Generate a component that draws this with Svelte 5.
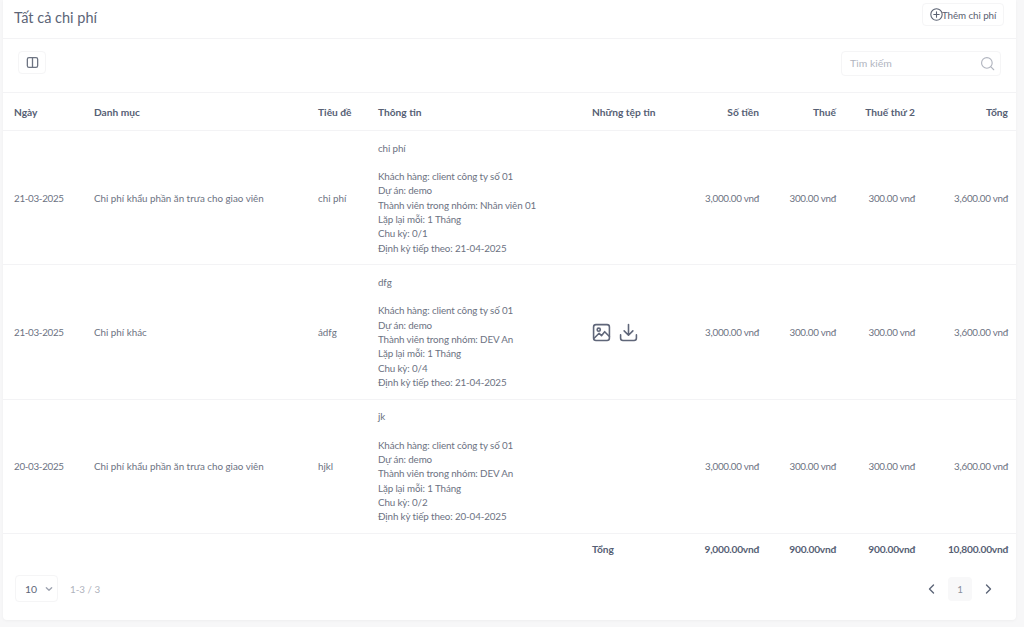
<script>
	let rows = [
		{ date: '21-03-2025', cat: 'Chi phí khẩu phần ăn trưa cho giao viên', title: 'chi phí', note: 'chi phí', member: 'Nhân viên 01', cycle: '0/1', next: '21-04-2025', files: false },
		{ date: '21-03-2025', cat: 'Chi phí khác', title: 'ádfg', note: 'dfg', member: 'DEV An', cycle: '0/4', next: '21-04-2025', files: true },
		{ date: '20-03-2025', cat: 'Chi phí khẩu phần ăn trưa cho giao viên', title: 'hjkl', note: 'jk', member: 'DEV An', cycle: '0/2', next: '20-04-2025', files: false }
	];
</script>

<div class="page">
	<div class="card">
		<div class="top">
			<h1>Tất cả chi phí</h1>
			<button class="add">
				<svg width="13" height="13" viewBox="0 0 24 24" fill="none" stroke="currentColor" stroke-width="2" stroke-linecap="round"><circle cx="12" cy="12" r="10.5" /><path d="M12 7v10M7 12h10" /></svg>Thêm chi phí
			</button>
		</div>
		<div class="tools">
			<button class="cols" aria-label="Cột">
				<svg width="13" height="13" viewBox="0 0 24 24" fill="none" stroke="currentColor" stroke-width="2.4"><rect x="2.5" y="3" width="19" height="18" rx="3" /><path d="M12 3v18" /></svg>
			</button>
			<div class="search">
				<span>Tìm kiếm</span>
				<svg width="15" height="15" viewBox="0 0 24 24" fill="none" stroke="currentColor" stroke-width="1.8" stroke-linecap="round"><circle cx="11" cy="11" r="8.5" /><path d="M17.5 17.5 22 22" /></svg>
			</div>
		</div>
		<table>
			<colgroup>
				<col style="width:80px" />
				<col style="width:224px" />
				<col style="width:60px" />
				<col style="width:214px" />
				<col style="width:109px" />
				<col style="width:80px" />
				<col style="width:77px" />
				<col style="width:79px" />
				<col style="width:90px" />
			</colgroup>
			<thead>
				<tr>
					<th>Ngày</th>
					<th>Danh mục</th>
					<th>Tiêu đề</th>
					<th>Thông tin</th>
					<th>Những tệp tin</th>
					<th class="num">Số tiền</th>
					<th class="num">Thuế</th>
					<th class="num">Thuế thứ 2</th>
					<th class="num">Tổng</th>
				</tr>
			</thead>
			<tbody>
				{#each rows as row}
					<tr>
						<td class="date">{row.date}</td>
						<td>{row.cat}</td>
						<td>{row.title}</td>
						<td class="info">
							<p class="note">{row.note}</p>
							<p>Khách hàng: client công ty số 01</p>
							<p>Dự án: demo</p>
							<p>Thành viên trong nhóm: {row.member}</p>
							<p>Lặp lại mỗi: 1 Tháng</p>
							<p>Chu kỳ: {row.cycle}</p>
							<p>Định kỳ tiếp theo: {row.next}</p>
						</td>
						<td>
							{#if row.files}
								<div class="files">
									<svg width="19" height="19" viewBox="0 0 24 24" fill="none" stroke="currentColor" stroke-width="2" stroke-linecap="round" stroke-linejoin="round"><rect x="2" y="2" width="20" height="20" rx="3" /><circle cx="8.5" cy="8.5" r="2" /><path d="m3 19 6-6 3 3 4-5 6 6" /></svg>
									<svg width="19" height="19" viewBox="0 0 24 24" fill="none" stroke="currentColor" stroke-width="2" stroke-linecap="round" stroke-linejoin="round"><path d="M12 2v13M6.5 10l5.5 5.5 5.5-5.5M2 15v4a3 3 0 0 0 3 3h14a3 3 0 0 0 3-3v-4" /></svg>
								</div>
							{/if}
						</td>
						<td class="num">3,000.00 vnđ</td>
						<td class="num">300.00 vnđ</td>
						<td class="num">300.00 vnđ</td>
						<td class="num">3,600.00 vnđ</td>
					</tr>
				{/each}
			</tbody>
			<tfoot>
				<tr>
					<td colspan="4"></td>
					<td>Tổng</td>
					<td class="num">9,000.00vnđ</td>
					<td class="num">900.00vnđ</td>
					<td class="num">900.00vnđ</td>
					<td class="num">10,800.00vnđ</td>
				</tr>
			</tfoot>
		</table>
		<div class="pager">
			<div class="size">
				<span>10</span>
				<svg width="8" height="8" viewBox="0 0 12 12" fill="none" stroke="currentColor" stroke-width="2" stroke-linecap="round" stroke-linejoin="round"><path d="m2 4 4 4 4-4" /></svg>
			</div>
			<span class="count">1-3 / 3</span>
			<div class="pages">
				<svg width="12" height="12" viewBox="0 0 12 12" fill="none" stroke="currentColor" stroke-width="1.4" stroke-linecap="round" stroke-linejoin="round"><path d="M7.5 2 3.5 6l4 4" /></svg>
				<span class="current">1</span>
				<svg width="12" height="12" viewBox="0 0 12 12" fill="none" stroke="currentColor" stroke-width="1.4" stroke-linecap="round" stroke-linejoin="round"><path d="m4.5 2 4 4-4 4" /></svg>
			</div>
		</div>
	</div>
</div>

<style>
	:global(body) {
		background: #f7f7f8;
		font-family: Lato, sans-serif;
	}

	.page {
		height: 627px;
		padding-left: 3px;
		padding-right: 8px;
		box-sizing: border-box;
		overflow: hidden;
	}

	.card {
		background: #fff;
		height: 620px;
		border-radius: 0 0 4px 4px;
		box-shadow: 0 1px 3px rgba(0, 0, 0, 0.04);
		color: #6c7282;
		font-size: 9.8px;
	}

	button {
		font: inherit;
		color: inherit;
		background: #fff;
		border: 1px solid #f5f5f6;
		border-radius: 4px;
		display: flex;
		align-items: center;
	}

	.top {
		height: 38px;
		display: flex;
		align-items: center;
		justify-content: space-between;
		padding: 0 12px 0 11px;
		border-bottom: 1px solid #f3f3f5;
	}

	h1 {
		margin: -3px 0 0;
		font-size: 14.5px;
		font-weight: 400;
		color: #5c6577;
	}

	.add {
		height: 23px;
		width: 82px;
		margin-top: -9px;
		padding: 0 7px;
		color: #5b6272;
		white-space: nowrap;
		letter-spacing: -0.08px;
	}

	.add svg {
		flex-shrink: 0;
		margin-right: -1px;
	}

	.tools {
		height: 53px;
		display: flex;
		align-items: center;
		justify-content: space-between;
		padding: 0 15px;
		border-bottom: 1px solid #f3f3f5;
	}

	.cols {
		width: 28px;
		height: 23px;
		justify-content: center;
		padding: 0;
		margin-top: -7px;
		color: #6d7482;
	}

	.search {
		width: 160px;
		height: 25px;
		box-sizing: border-box;
		display: flex;
		align-items: center;
		justify-content: space-between;
		padding: 0 5px 0 8px;
		border: 1px solid #f5f5f6;
		border-radius: 4px;
		color: #b1b5bf;
		font-size: 10.4px;
		margin-top: -5px;
	}

	table {
		width: 1013px;
		table-layout: fixed;
		border-collapse: collapse;
	}

	th {
		height: 37px;
		padding: 0 11px;
		text-align: left;
		font-size: 10.2px;
		font-weight: 700;
		color: #566074;
		border-bottom: 1px solid #f3f3f5;
	}

	td {
		padding: 0 11px;
		border-bottom: 1px solid #f3f3f5;
		white-space: nowrap;
	}

	th:last-child,
	td:last-child {
		padding-right: 8px;
	}

	.num {
		text-align: right;
		letter-spacing: -0.25px;
	}

	th.num {
		letter-spacing: 0;
	}

	.date {
		letter-spacing: -0.3px;
	}

	.info {
		padding-top: 9.5px;
		padding-bottom: 9.5px;
		line-height: 14.3px;
		letter-spacing: -0.12px;
	}

	p {
		margin: 0;
	}

	.note {
		margin-bottom: 14.3px;
	}

	.files {
		display: flex;
		gap: 8px;
		color: #5f6679;
	}

	tfoot td {
		height: 30px;
		border-bottom: 0;
		font-size: 10.2px;
		font-weight: 700;
		color: #566074;
	}

	.pager {
		display: flex;
		align-items: center;
		padding: 11px 22px 0 12px;
	}

	.size {
		width: 43px;
		height: 27px;
		box-sizing: border-box;
		display: flex;
		align-items: center;
		justify-content: space-between;
		padding: 0 4px 0 9px;
		border: 1px solid #f5f5f6;
		border-radius: 4px;
		font-size: 10.4px;
		color: #5c6577;
	}

	.size svg {
		color: #9ea3b0;
	}

	.count {
		margin-left: 12px;
		color: #afb3bd;
	}

	.pages {
		margin-left: auto;
		display: flex;
		align-items: center;
		gap: 10px;
		color: #5c6577;
	}

	.current {
		width: 24px;
		height: 24px;
		border-radius: 4px;
		background: #f8f8f9;
		display: flex;
		align-items: center;
		justify-content: center;
		color: #8a8f9c;
	}
</style>
